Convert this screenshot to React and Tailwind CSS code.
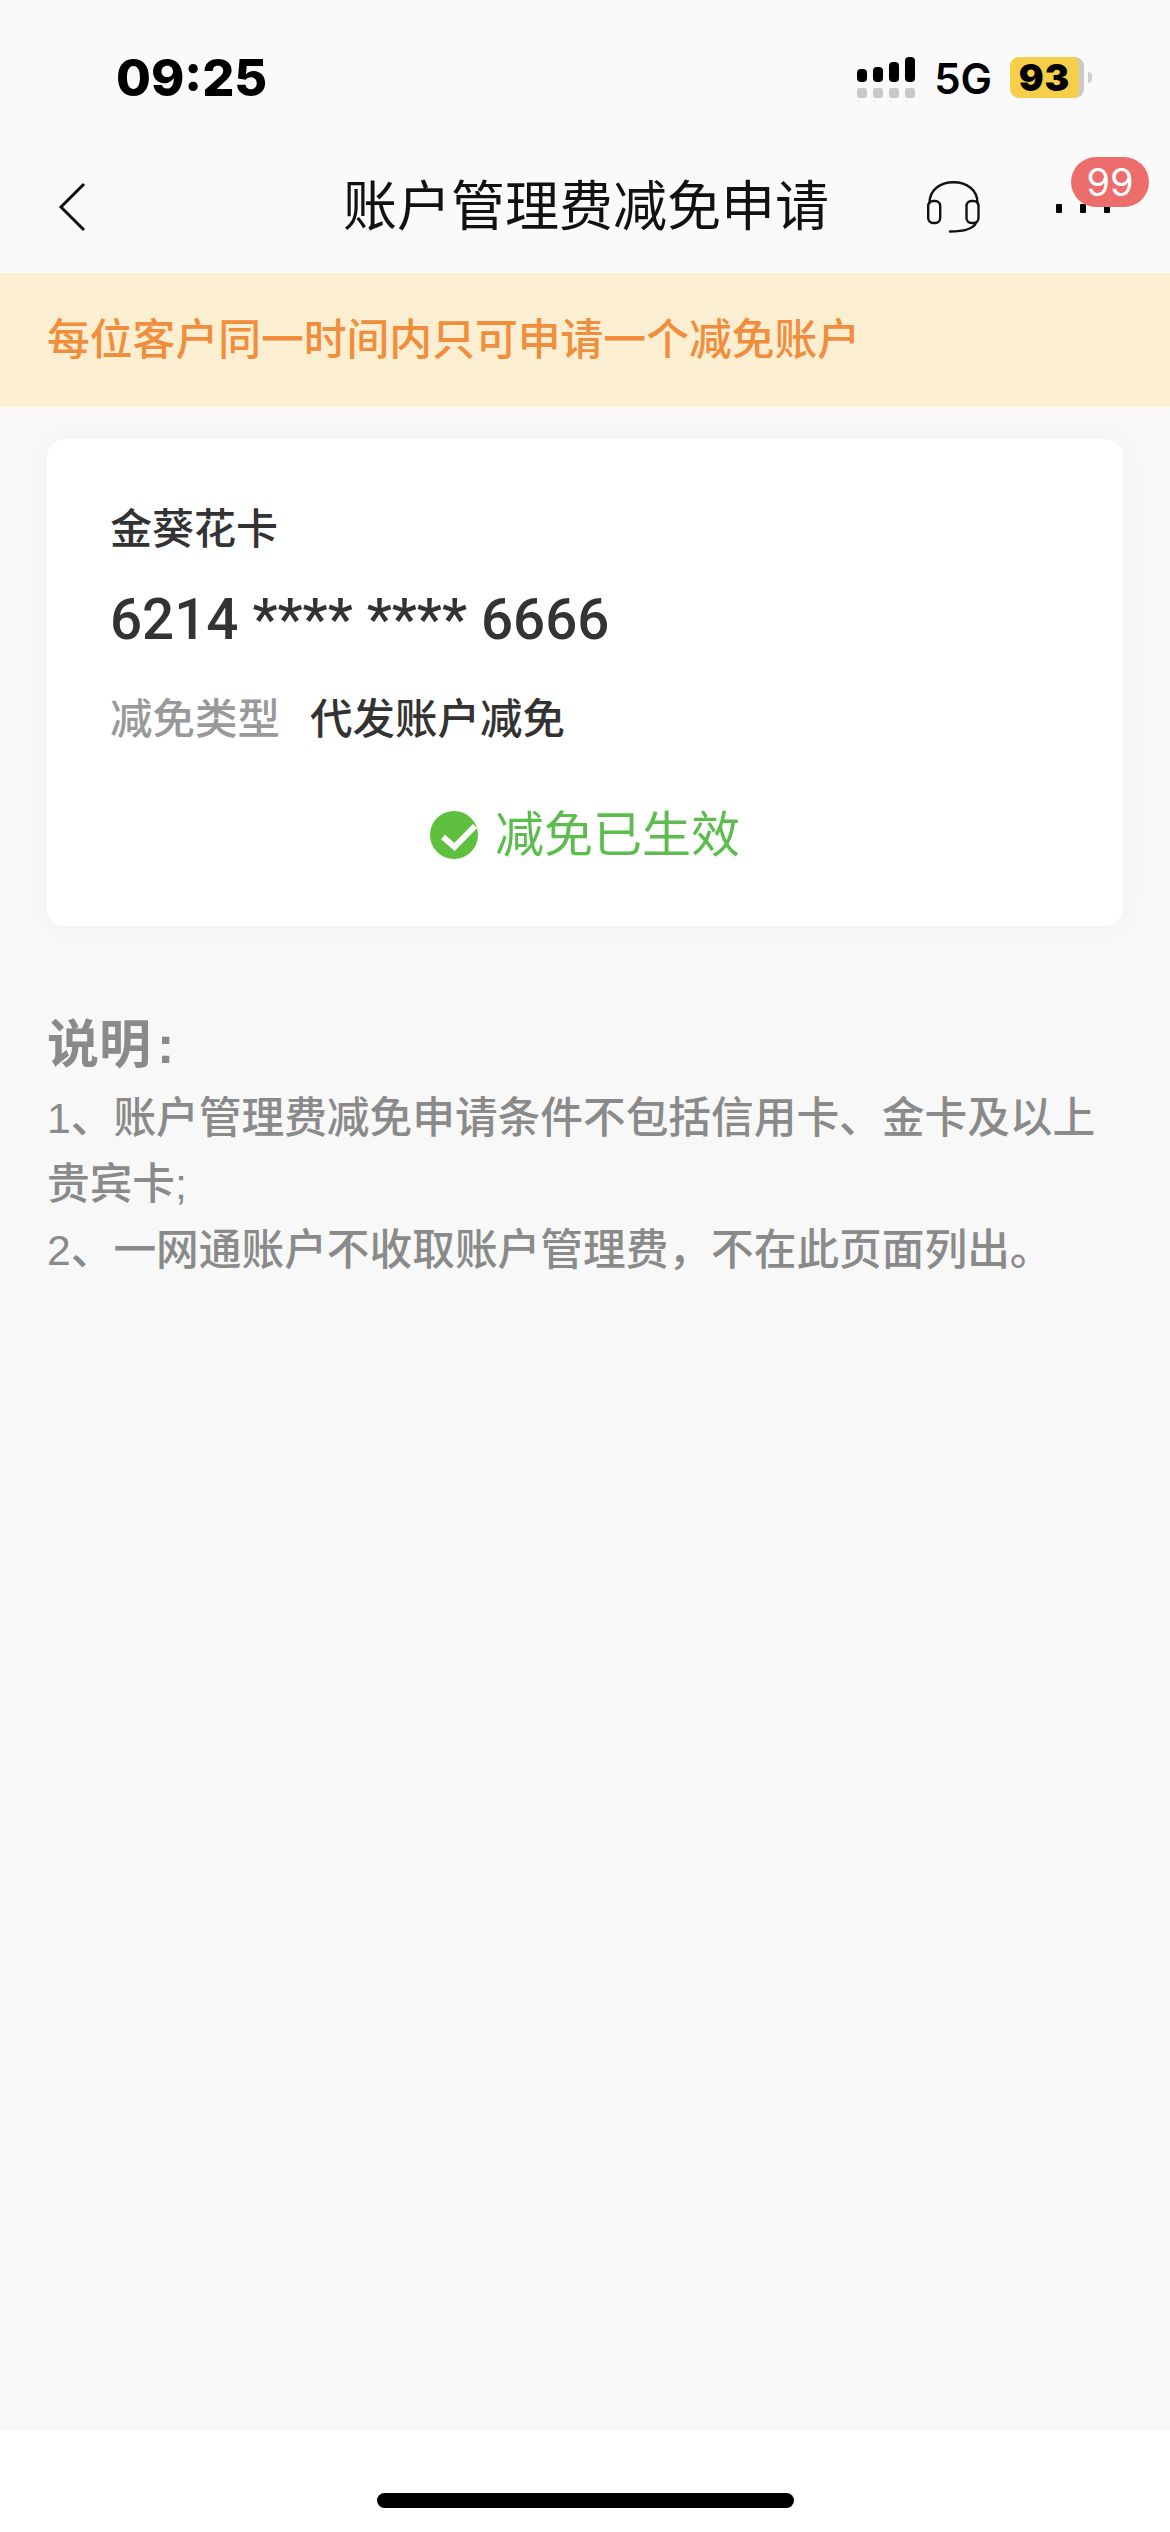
const cjk = "font-['Liberation_Sans','Noto_Sans_CJK_SC',sans-serif]";

const SignalBars = () => (
  <div className="flex flex-col gap-[6px] w-[58px]">
    <div className="flex items-end justify-between h-[25px]">
      <div className="w-[10px] h-[13px] rounded-[4px] bg-black" />
      <div className="w-[10px] h-[15px] rounded-[4px] bg-black" />
      <div className="w-[10px] h-[20px] rounded-[4px] bg-black" />
      <div className="w-[10px] h-[25px] rounded-[4px] bg-black" />
    </div>
    <div className="flex justify-between">
      {[0, 1, 2, 3].map((i) => (
        <div key={i} className="w-[10px] h-[10px] rounded-[3px] bg-[#c8c8c8]" />
      ))}
    </div>
  </div>
);

const Battery = () => (
  <div className="flex items-center gap-[4px]">
    <div className="flex items-center justify-center w-[74px] h-[41px] rounded-[9px] bg-[#f6cf4a] border-r-[5px] border-[#c9c9c9]">
      <span className="font-['Inter',sans-serif] font-black text-[37px] leading-[41px] text-black tracking-[1px]">93</span>
    </div>
    <div className="w-[4px] h-[11px] rounded-r-full bg-[#d0d0d0]" />
  </div>
);

const Headset = () => (
  <svg width="53" height="52" viewBox="0 0 53 52" fill="none" stroke="#111" strokeWidth="2.4" strokeLinecap="round">
    <path d="M2.5 22C2.5 9 13 1.2 26.5 1.2S50.5 9 50.5 22" />
    <rect x="1.2" y="20" width="12" height="22" rx="5" />
    <rect x="39.5" y="20" width="12" height="22" rx="5" />
    <path d="M49 42C46 48 38 50.5 23 50.5" />
  </svg>
);

const CheckCircle = () => (
  <svg width="48" height="48" viewBox="0 0 48 48">
    <circle cx="24" cy="24" r="24" fill="#5fc03f" />
    <path d="M13 26L24.5 36L45 15" fill="none" stroke="#fff" strokeWidth="6" />
  </svg>
);

const App = () => {
  return (
    <div className={`${cjk} w-[1170px] h-[2532px] flex flex-col bg-[#f8f8f8]`}>
      <div className="bg-[#fafafa]">
        <div className="h-[141px] flex items-start justify-between pl-[116px] pr-[78px] pt-[57px]">
          <span className="font-['Inter',sans-serif] font-extrabold text-[50.5px] leading-[41px] text-black">09:25</span>
          <div className="flex items-start">
            <SignalBars />
            <span className="ml-[19px] mt-[1px] font-['Inter',sans-serif] font-semibold text-[42px] leading-[41px] text-black">5G</span>
            <div className="ml-[18px]"><Battery /></div>
          </div>
        </div>

        <div className="h-[132px] flex items-center pl-[58px]">
          <svg width="28" height="50" viewBox="0 0 28 50" fill="none" stroke="#111" strokeWidth="3">
            <path d="M26 2L3 25L26 48" />
          </svg>
          <h1 className="ml-[257px] text-[54px] leading-none font-normal text-[#111] whitespace-nowrap">账户管理费减免申请</h1>
          <div className="ml-[98px]"><Headset /></div>
          <div className="relative ml-[76px] flex gap-[18px] mt-[2px]">
            <div className="w-[6px] h-[9px] bg-black rounded-[1px]" />
            <div className="w-[6px] h-[9px] bg-black rounded-[1px]" />
            <div className="w-[6px] h-[9px] bg-black rounded-[1px]" />
            <div className="absolute left-[15px] top-[-47px] w-[78px] h-[50px] rounded-full bg-[#ec6d6b] flex items-center justify-center font-['Inter',sans-serif] text-[38px] leading-none text-white">
              99
            </div>
          </div>
        </div>
      </div>

      <div className="h-[134px] flex items-center pl-[47px] bg-[#fcefd1]">
        <p className="text-[42.8px] font-medium leading-none text-[#f08e3e]">每位客户同一时间内只可申请一个减免账户</p>
      </div>

      <div className="flex-1 px-[47px] pt-[32px]">
        <div className="h-[487px] rounded-[18px] bg-white shadow-[0_0_30px_rgba(0,0,0,0.03)] pl-[63px] pt-[68px]">
          <p className="text-[42px] font-medium leading-[46px] text-[#333]">金葵花卡</p>
          <p className="mt-[37px] font-['Roboto',sans-serif] font-medium text-[56.5px] leading-[60px] text-[#333]">6214 **** **** 6666</p>
          <div className="mt-[47px] flex gap-[30px] text-[42.5px] leading-[46px]">
            <span className="font-medium text-[#999]">减免类型</span>
            <span className="font-medium text-[#333]">代发账户减免</span>
          </div>
          <div className="mt-[68px] ml-[320px] flex items-center gap-[17px]">
            <CheckCircle />
            <span className="text-[49px] leading-[48px] text-[#5cbd4e]">减免已生效</span>
          </div>
        </div>

        <div className="mt-[89px] text-[#8a8a8a]">
          <p className="text-[52px] font-bold leading-[60px]">说明<span className="ml-[6px]">:</span></p>
          <p className="mt-[10px] text-[42.7px] font-medium leading-[66px]">
            1、账户管理费减免申请条件不包括信用卡、金卡及以上
            <br />
            贵宾卡;
            <br />
            2、一网通账户不收取账户管理费{"\uFF0C"}不在此页面列出。
          </p>
        </div>
      </div>

      <div className="h-[102px] bg-white flex justify-center pt-[63px]">
        <div className="w-[417px] h-[15px] rounded-full bg-black" />
      </div>
    </div>
  );
};

export default App;
